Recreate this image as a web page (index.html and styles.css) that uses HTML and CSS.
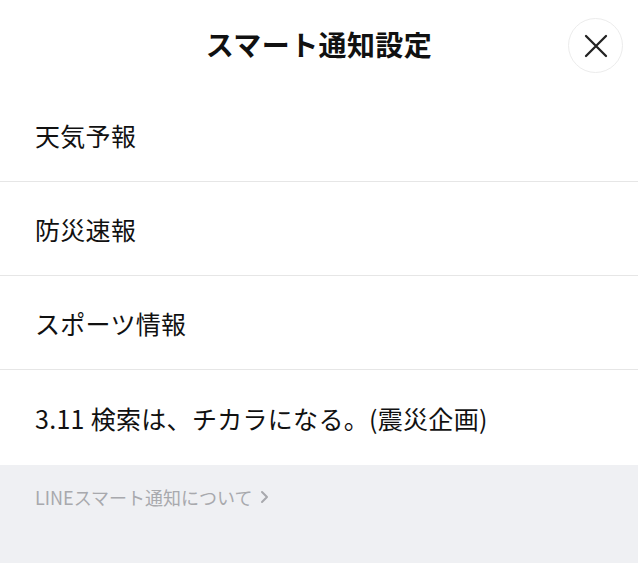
FILE: index.html
```html
<!DOCTYPE html>
<html lang="ja">
<head>
<meta charset="utf-8">
<link rel="stylesheet" href="styles.css">
</head>
<body>
<div class="page">
  <header class="header">
    <h1 class="title">スマート通知設定</h1>
    <button class="close" aria-label="閉じる">
      <svg width="24" height="24" viewBox="0 0 24 24"><path d="M2 2 L22 22 M22 2 L2 22" stroke="#222" stroke-width="2.3" stroke-linecap="round" fill="none"/></svg>
    </button>
  </header>
  <ul class="list">
    <li class="row">天気予報</li>
    <li class="row">防災速報</li>
    <li class="row">スポーツ情報</li>
    <li class="row">3.11 検索は、チカラになる。(震災企画)</li>
  </ul>
  <footer class="footer">
    <a class="about">LINEスマート通知について<svg class="chev" width="9" height="14" viewBox="0 0 9 14"><path d="M2 2 L7 7 L2 12" stroke="#a8a9ad" stroke-width="2" fill="none" stroke-linecap="round" stroke-linejoin="round"/></svg></a>
  </footer>
</div>
</body>
</html>
```
FILE: styles.css
```css
html, body { margin: 0; padding: 0; }
body {
  font-family: "Noto Sans CJK JP", "Noto Sans", sans-serif;
  background: #fff;
  color: #111;
}
.page { width: 638px; height: 563px; display: flex; flex-direction: column; overflow: hidden; }
.header {
  height: 88px;
  display: flex;
  align-items: center;
  justify-content: center;
  position: relative;
}
.title { margin: 0; font-size: 28px; font-weight: 700; letter-spacing: 0.4px; color: #111; }
.close {
  position: absolute;
  right: 15px;
  top: 18px;
  width: 55px;
  height: 55px;
  border-radius: 50%;
  border: 1px solid #ececec;
  background: #fff;
  display: flex;
  align-items: center;
  justify-content: center;
  padding: 0;
}
.list { list-style: none; margin: 0; padding: 0; }
.row {
  height: 93px;
  display: flex;
  align-items: center;
  padding-left: 35px;
  font-size: 25px;
  letter-spacing: 0.3px;
  border-bottom: 1px solid #e6e6e6;
  color: #111;
}
.row:last-child { border-bottom: none; height: 95px; }
.footer { flex: 1; background: #eff0f3; padding: 19px 35px; }
.about { font-size: 18px; color: #a8a9ad; display: inline-flex; align-items: center; }
.chev { margin-left: 7px; }
```
